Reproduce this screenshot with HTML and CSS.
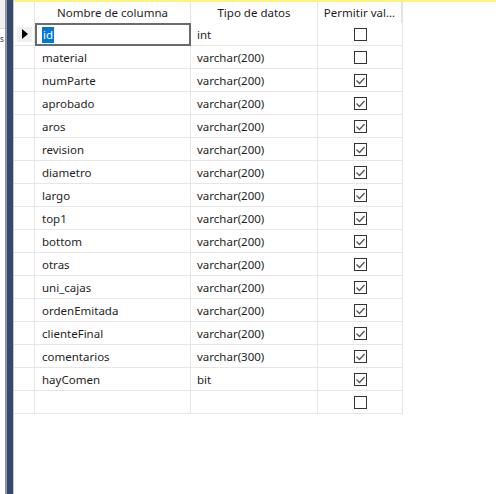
FILE: index.html
```html
<!DOCTYPE html>
<html>
<head>
<meta charset="utf-8">
<link rel="stylesheet" href="styles.css">
</head>
<body>
<div class="page">
  <div class="side">
    <div class="side-pane"><div class="side-top"></div><div class="side-frag">s</div></div>
    <div class="side-bar"></div>
  </div>
  <div class="main">
    <div class="grid">
      <div class="hdr rh"></div>
      <div class="hdr">Nombre de columna</div>
      <div class="hdr">Tipo de datos</div>
      <div class="hdr last">Permitir val...</div>

      <div class="rh cur"><span class="arrow"></span></div>
      <div class="c name sel"><span class="hl">id</span></div>
      <div class="c">int</div>
      <div class="c chk"><span class="box"></span></div>
    </div>
    <div class="grid" id="rows"></div>
  </div>
</div>
<script>
const rows = [
 ["material","varchar(200)",0],["numParte","varchar(200)",1],["aprobado","varchar(200)",1],
 ["aros","varchar(200)",1],["revision","varchar(200)",1],["diametro","varchar(200)",1],
 ["largo","varchar(200)",1],["top1","varchar(200)",1],["bottom","varchar(200)",1],
 ["otras","varchar(200)",1],["uni_cajas","varchar(200)",1],["ordenEmitada","varchar(200)",1],
 ["clienteFinal","varchar(200)",1],["comentarios","varchar(300)",1],["hayComen","bit",1],["","",0]
];
const g = document.getElementById('rows');
const tick = '<svg width="11" height="11" viewBox="0 0 11 11"><path d="M1.5 5.5 L4.5 8.5 L9.5 3" fill="none" stroke="#555" stroke-width="1.3"/></svg>';
for (const [n,t,c] of rows) {
  g.insertAdjacentHTML('beforeend',
   `<div class="rh"></div><div class="c name">${n}</div><div class="c">${t}</div><div class="c chk"><span class="box">${c?tick:''}</span></div>`);
}
</script>
</body>
</html>
```

FILE: styles.css
```css
html, body { margin: 0; padding: 0; background: #fff; }
body { font-family: "Noto Sans", "Open Sans", sans-serif; font-size: 11.5px; color: #1e1e1e; }
.page { display: flex; width: 496px; height: 494px; overflow: hidden; }
.side { display: flex; width: 14px; flex: none; }
.side-pane { width: 5px; display: flex; flex-direction: column; }
.side-top { height: 28px; background: #f0f0f0; border-bottom: 1px solid #d9d9d9; }
.side-frag { height: 12px; margin-top: 4px; font-size: 8px; line-height: 12px; color: #333; }
.side-bar { background: #34496b; border-left: 2px solid #8d97a8; border-right: 1px solid #c3c8d1; width: 6px; }
.main { flex: 1; border-top: 2px solid #fff08c; }
.grid { display: grid; grid-template-columns: 21px 156px 127px 85px; grid-auto-rows: 23px; }
.main > .grid:first-child { grid-template-rows: 21px 23px; }
.hdr { display: flex; align-items: center; justify-content: center; border-right: 1px solid #e6e6e6; white-space: nowrap; }
.hdr.last { border-right: 2px solid #e3e3e3; }
.rh { border-right: 1px solid #e6e6e6; border-bottom: 1px solid #e6e6e6; display: flex; align-items: center; justify-content: center; }
.hdr.rh { border-bottom: none; }
.c { border-right: 1px solid #e6e6e6; border-bottom: 1px solid #e6e6e6; display: flex; align-items: center; padding-left: 6px; padding-top: 1px; white-space: nowrap; }
.c.name { padding-left: 7px; }
.c.chk { justify-content: center; padding-left: 0; padding-top: 0; }
.sel { border: 2px solid #6b6b6b; }
.c.name.sel { padding-left: 5px; }
.hl { background: #0078d7; color: #fff; padding: 0 1px; line-height: 16px; }
.cur .arrow { display: block; width: 0; height: 0; border-top: 5px solid transparent; border-bottom: 5px solid transparent; border-left: 6px solid #000; margin-left: 1px; }
.cur { background: linear-gradient(#f0f0f0, #f0f0f0) center / 15px 15px no-repeat; }
.box { width: 11px; height: 11px; border: 1px solid #333; display: flex; align-items: center; justify-content: center; background: #fff; }
.box svg { display: block; }
```
